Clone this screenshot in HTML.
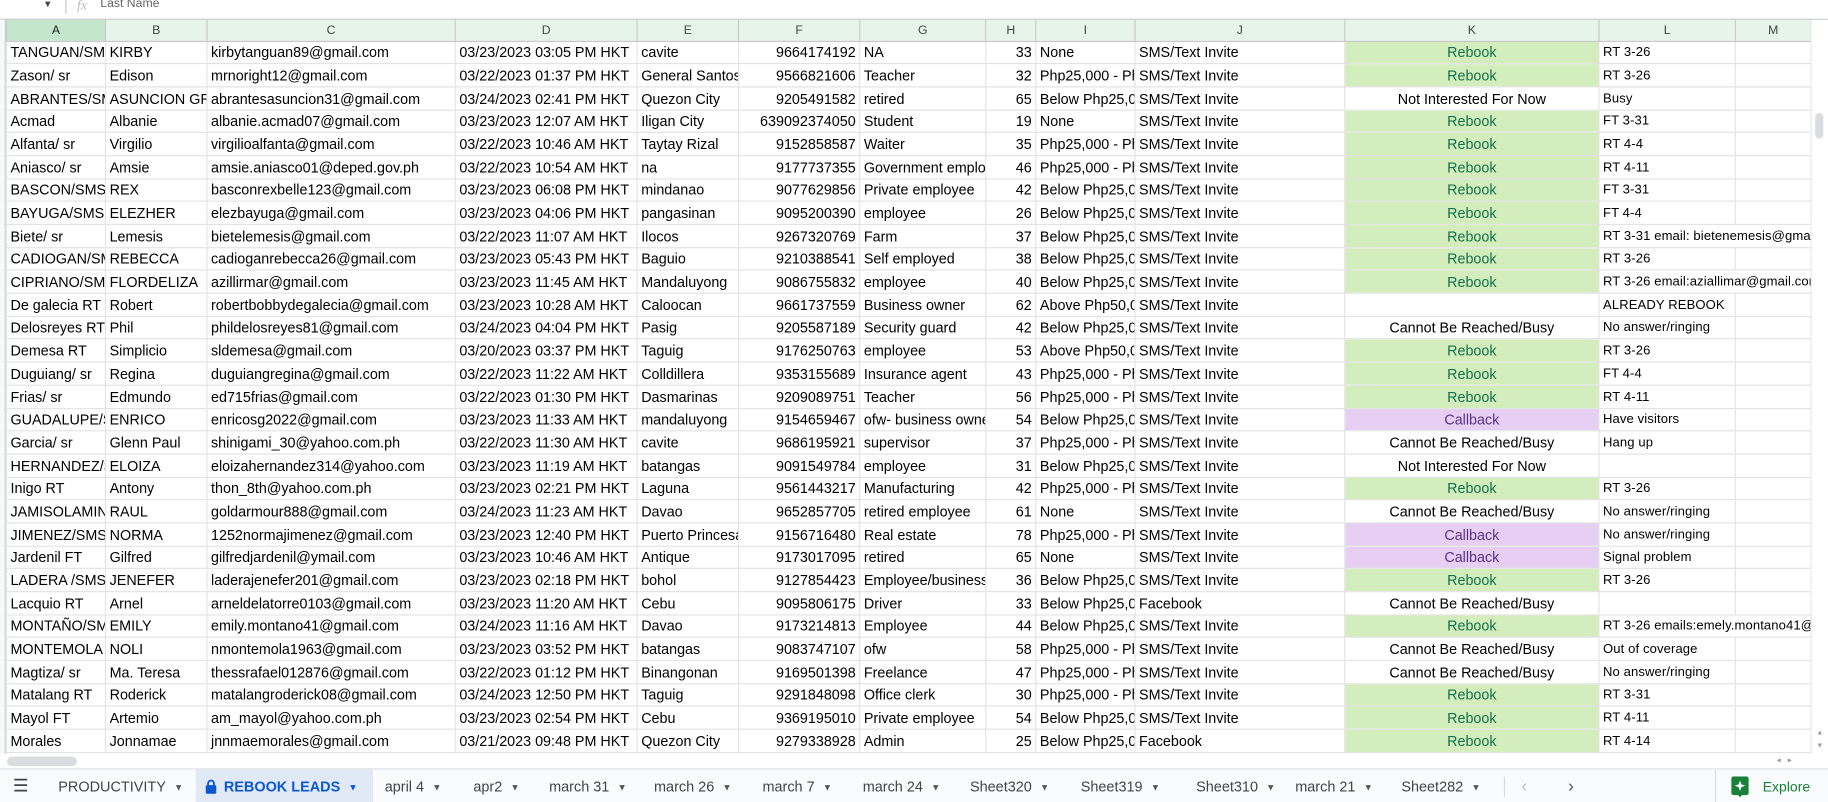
<!DOCTYPE html>
<html><head><meta charset="utf-8">
<style>
*{box-sizing:border-box;margin:0;padding:0}
html,body{width:1828px;height:802px;overflow:hidden;background:#fff}
#w{position:absolute;left:0;top:0;width:1568px;height:688px;transform:scale(1.16582);transform-origin:0 0;font-family:"Liberation Sans",Arial,sans-serif;overflow:hidden;background:#fff}
#top{position:absolute;left:0;top:0;width:1568px;height:17px;background:#fff;border-bottom:1px solid #c7c7c7}
#top .ar{position:absolute;left:37px;top:-1px;font-size:8px;color:#444}
#top .dv{position:absolute;left:56px;top:0;width:1px;height:12px;background:#c7c7c7}
#top .fx{position:absolute;left:66px;top:-3px;font-size:12px;font-style:italic;color:#bbb;font-family:"Liberation Serif",serif}
#top .ln{position:absolute;left:86px;top:-3px;font-size:10.5px;color:#666}
#lstrip{position:absolute;left:0;top:17px;width:5px;height:630px;background:#f8f9fa;border-right:1px solid #b7dfc1}
table{position:absolute;left:5px;top:17px;border-collapse:collapse;table-layout:fixed;width:1548px}
td{height:19.7px;border:1px solid #e2e3e3;font-size:12.3px;color:#000;white-space:nowrap;overflow:hidden;padding:0 3px;line-height:17px;vertical-align:bottom;text-overflow:clip}
tr.h td{height:18px;background:#e6f4ea;color:#444;text-align:center;font-size:10.5px;vertical-align:middle;line-height:16px;border-color:#c7c7c7;border-top:none}
tr.h td.sel{background:#c4e7cb;color:#222}
td.r{text-align:right}
td.k{text-align:center}
td.rb{background:#d4edbc;color:#11734b;text-align:center}
td.cb{background:#e6cff2;color:#5a3286;text-align:center}
td.l{font-size:11.2px;letter-spacing:0.1px}
#vs{position:absolute;left:1553px;top:17px;width:15px;height:630px;background:#fff;border-left:1px solid #e8e8e8}
#vs .t{position:absolute;left:3px;top:80px;width:7px;height:22px;border-radius:4px;background:#dadce0}
#vs .u{position:absolute;left:4px;top:609px;font-size:6px;color:#999}
#vs .d{position:absolute;left:4px;top:620px;font-size:6px;color:#999}
#hs{position:absolute;left:0;top:647px;width:1568px;height:12px;background:#fff}
#hs .t{position:absolute;left:6px;top:2px;width:60px;height:8px;border-radius:4px;background:#dadce0}
#hs .a{position:absolute;left:1524px;top:1px;font-size:7px;color:#999;letter-spacing:6px}
#tabs{position:absolute;left:0;top:659px;width:1568px;height:29px;background:#f9fbfd;border-top:1px solid #e0e3e7;font-size:12.4px;color:#444}
.tb{position:absolute;top:0;height:29px;line-height:30px;white-space:nowrap}
.tb i{font-style:normal;font-size:8px;color:#555;margin-left:7px;position:relative;top:-1px}
.act{background:#e1e9f7;color:#0b57d0;font-weight:bold;padding:0 0 0 8px}
.act i{color:#0b57d0}
#exp{position:absolute;left:1471px;top:0;width:97px;height:29px;border-left:1px solid #dadce0}
</style></head><body><div id="w">
<div id="top"><span class="ar">▼</span><span class="dv"></span><span class="fx">fx</span><span class="ln">Last Name</span></div>
<div id="lstrip"></div>
<table>
<colgroup><col style="width:85px"><col style="width:87px"><col style="width:213px"><col style="width:156px"><col style="width:87px"><col style="width:104px"><col style="width:108px"><col style="width:43px"><col style="width:85px"><col style="width:180px"><col style="width:218px"><col style="width:117px"><col style="width:65px"></colgroup>
<tr class="h"><td class="sel">A</td><td>B</td><td>C</td><td>D</td><td>E</td><td>F</td><td>G</td><td>H</td><td>I</td><td>J</td><td>K</td><td>L</td><td>M</td></tr>
<tr><td>TANGUAN/SMS</td><td>KIRBY</td><td>kirbytanguan89@gmail.com</td><td>03/23/2023 03:05 PM HKT</td><td>cavite</td><td class="r">9664174192</td><td>NA</td><td class="r">33</td><td>None</td><td>SMS/Text Invite</td><td class="rb">Rebook</td><td class="l">RT 3-26</td><td></td></tr>
<tr><td>Zason/ sr</td><td>Edison</td><td>mrnoright12@gmail.com</td><td>03/22/2023 01:37 PM HKT</td><td>General Santos</td><td class="r">9566821606</td><td>Teacher</td><td class="r">32</td><td>Php25,000 - Php</td><td>SMS/Text Invite</td><td class="rb">Rebook</td><td class="l">RT 3-26</td><td></td></tr>
<tr><td>ABRANTES/SMS</td><td>ASUNCION GR</td><td>abrantesasuncion31@gmail.com</td><td>03/24/2023 02:41 PM HKT</td><td>Quezon City</td><td class="r">9205491582</td><td>retired</td><td class="r">65</td><td>Below Php25,000</td><td>SMS/Text Invite</td><td class="k">Not Interested For Now</td><td class="l">Busy</td><td></td></tr>
<tr><td>Acmad</td><td>Albanie</td><td>albanie.acmad07@gmail.com</td><td>03/23/2023 12:07 AM HKT</td><td>Iligan City</td><td class="r">639092374050</td><td>Student</td><td class="r">19</td><td>None</td><td>SMS/Text Invite</td><td class="rb">Rebook</td><td class="l">FT 3-31</td><td></td></tr>
<tr><td>Alfanta/ sr</td><td>Virgilio</td><td>virgilioalfanta@gmail.com</td><td>03/22/2023 10:46 AM HKT</td><td>Taytay Rizal</td><td class="r">9152858587</td><td>Waiter</td><td class="r">35</td><td>Php25,000 - Php</td><td>SMS/Text Invite</td><td class="rb">Rebook</td><td class="l">RT 4-4</td><td></td></tr>
<tr><td>Aniasco/ sr</td><td>Amsie</td><td>amsie.aniasco01@deped.gov.ph</td><td>03/22/2023 10:54 AM HKT</td><td>na</td><td class="r">9177737355</td><td>Government employee</td><td class="r">46</td><td>Php25,000 - Php</td><td>SMS/Text Invite</td><td class="rb">Rebook</td><td class="l">RT 4-11</td><td></td></tr>
<tr><td>BASCON/SMS</td><td>REX</td><td>basconrexbelle123@gmail.com</td><td>03/23/2023 06:08 PM HKT</td><td>mindanao</td><td class="r">9077629856</td><td>Private employee</td><td class="r">42</td><td>Below Php25,000</td><td>SMS/Text Invite</td><td class="rb">Rebook</td><td class="l">FT 3-31</td><td></td></tr>
<tr><td>BAYUGA/SMS</td><td>ELEZHER</td><td>elezbayuga@gmail.com</td><td>03/23/2023 04:06 PM HKT</td><td>pangasinan</td><td class="r">9095200390</td><td>employee</td><td class="r">26</td><td>Below Php25,000</td><td>SMS/Text Invite</td><td class="rb">Rebook</td><td class="l">FT 4-4</td><td></td></tr>
<tr><td>Biete/ sr</td><td>Lemesis</td><td>bietelemesis@gmail.com</td><td>03/22/2023 11:07 AM HKT</td><td>Ilocos</td><td class="r">9267320769</td><td>Farm</td><td class="r">37</td><td>Below Php25,000</td><td>SMS/Text Invite</td><td class="rb">Rebook</td><td class="l" colspan="2">RT 3-31 email: bietenemesis@gmail.com</td></tr>
<tr><td>CADIOGAN/SMS</td><td>REBECCA</td><td>cadioganrebecca26@gmail.com</td><td>03/23/2023 05:43 PM HKT</td><td>Baguio</td><td class="r">9210388541</td><td>Self employed</td><td class="r">38</td><td>Below Php25,000</td><td>SMS/Text Invite</td><td class="rb">Rebook</td><td class="l">RT 3-26</td><td></td></tr>
<tr><td>CIPRIANO/SMS</td><td>FLORDELIZA</td><td>azillirmar@gmail.com</td><td>03/23/2023 11:45 AM HKT</td><td>Mandaluyong</td><td class="r">9086755832</td><td>employee</td><td class="r">40</td><td>Below Php25,000</td><td>SMS/Text Invite</td><td class="rb">Rebook</td><td class="l" colspan="2">RT 3-26 email:aziallimar@gmail.com</td></tr>
<tr><td>De galecia RT</td><td>Robert</td><td>robertbobbydegalecia@gmail.com</td><td>03/23/2023 10:28 AM HKT</td><td>Caloocan</td><td class="r">9661737559</td><td>Business owner</td><td class="r">62</td><td>Above Php50,000</td><td>SMS/Text Invite</td><td></td><td class="l">ALREADY REBOOK</td><td></td></tr>
<tr><td>Delosreyes RT</td><td>Phil</td><td>phildelosreyes81@gmail.com</td><td>03/24/2023 04:04 PM HKT</td><td>Pasig</td><td class="r">9205587189</td><td>Security guard</td><td class="r">42</td><td>Below Php25,000</td><td>SMS/Text Invite</td><td class="k">Cannot Be Reached/Busy</td><td class="l">No answer/ringing</td><td></td></tr>
<tr><td>Demesa RT</td><td>Simplicio</td><td>sldemesa@gmail.com</td><td>03/20/2023 03:37 PM HKT</td><td>Taguig</td><td class="r">9176250763</td><td>employee</td><td class="r">53</td><td>Above Php50,000</td><td>SMS/Text Invite</td><td class="rb">Rebook</td><td class="l">RT 3-26</td><td></td></tr>
<tr><td>Duguiang/ sr</td><td>Regina</td><td>duguiangregina@gmail.com</td><td>03/22/2023 11:22 AM HKT</td><td>Colldillera</td><td class="r">9353155689</td><td>Insurance agent</td><td class="r">43</td><td>Php25,000 - Php</td><td>SMS/Text Invite</td><td class="rb">Rebook</td><td class="l">FT 4-4</td><td></td></tr>
<tr><td>Frias/ sr</td><td>Edmundo</td><td>ed715frias@gmail.com</td><td>03/22/2023 01:30 PM HKT</td><td>Dasmarinas</td><td class="r">9209089751</td><td>Teacher</td><td class="r">56</td><td>Php25,000 - Php</td><td>SMS/Text Invite</td><td class="rb">Rebook</td><td class="l">RT 4-11</td><td></td></tr>
<tr><td>GUADALUPE/SMS</td><td>ENRICO</td><td>enricosg2022@gmail.com</td><td>03/23/2023 11:33 AM HKT</td><td>mandaluyong</td><td class="r">9154659467</td><td>ofw- business owner</td><td class="r">54</td><td>Below Php25,000</td><td>SMS/Text Invite</td><td class="cb">Callback</td><td class="l">Have visitors</td><td></td></tr>
<tr><td>Garcia/ sr</td><td>Glenn Paul</td><td>shinigami_30@yahoo.com.ph</td><td>03/22/2023 11:30 AM HKT</td><td>cavite</td><td class="r">9686195921</td><td>supervisor</td><td class="r">37</td><td>Php25,000 - Php</td><td>SMS/Text Invite</td><td class="k">Cannot Be Reached/Busy</td><td class="l">Hang up</td><td></td></tr>
<tr><td>HERNANDEZ/SMS</td><td>ELOIZA</td><td>eloizahernandez314@yahoo.com</td><td>03/23/2023 11:19 AM HKT</td><td>batangas</td><td class="r">9091549784</td><td>employee</td><td class="r">31</td><td>Below Php25,000</td><td>SMS/Text Invite</td><td class="k">Not Interested For Now</td><td class="l"></td><td></td></tr>
<tr><td>Inigo RT</td><td>Antony</td><td>thon_8th@yahoo.com.ph</td><td>03/23/2023 02:21 PM HKT</td><td>Laguna</td><td class="r">9561443217</td><td>Manufacturing</td><td class="r">42</td><td>Php25,000 - Php</td><td>SMS/Text Invite</td><td class="rb">Rebook</td><td class="l">RT 3-26</td><td></td></tr>
<tr><td>JAMISOLAMIN</td><td>RAUL</td><td>goldarmour888@gmail.com</td><td>03/24/2023 11:23 AM HKT</td><td>Davao</td><td class="r">9652857705</td><td>retired employee</td><td class="r">61</td><td>None</td><td>SMS/Text Invite</td><td class="k">Cannot Be Reached/Busy</td><td class="l">No answer/ringing</td><td></td></tr>
<tr><td>JIMENEZ/SMS</td><td>NORMA</td><td>1252normajimenez@gmail.com</td><td>03/23/2023 12:40 PM HKT</td><td>Puerto Princesa</td><td class="r">9156716480</td><td>Real estate</td><td class="r">78</td><td>Php25,000 - Php</td><td>SMS/Text Invite</td><td class="cb">Callback</td><td class="l">No answer/ringing</td><td></td></tr>
<tr><td>Jardenil FT</td><td>Gilfred</td><td>gilfredjardenil@ymail.com</td><td>03/23/2023 10:46 AM HKT</td><td>Antique</td><td class="r">9173017095</td><td>retired</td><td class="r">65</td><td>None</td><td>SMS/Text Invite</td><td class="cb">Callback</td><td class="l">Signal problem</td><td></td></tr>
<tr><td>LADERA /SMS</td><td>JENEFER</td><td>laderajenefer201@gmail.com</td><td>03/23/2023 02:18 PM HKT</td><td>bohol</td><td class="r">9127854423</td><td>Employee/business</td><td class="r">36</td><td>Below Php25,000</td><td>SMS/Text Invite</td><td class="rb">Rebook</td><td class="l">RT 3-26</td><td></td></tr>
<tr><td>Lacquio RT</td><td>Arnel</td><td>arneldelatorre0103@gmail.com</td><td>03/23/2023 11:20 AM HKT</td><td>Cebu</td><td class="r">9095806175</td><td>Driver</td><td class="r">33</td><td>Below Php25,000</td><td>Facebook</td><td class="k">Cannot Be Reached/Busy</td><td class="l"></td><td></td></tr>
<tr><td>MONTAÑO/SMS</td><td>EMILY</td><td>emily.montano41@gmail.com</td><td>03/24/2023 11:16 AM HKT</td><td>Davao</td><td class="r">9173214813</td><td>Employee</td><td class="r">44</td><td>Below Php25,000</td><td>SMS/Text Invite</td><td class="rb">Rebook</td><td class="l" colspan="2">RT 3-26 emails:emely.montano41@gmail.com</td></tr>
<tr><td>MONTEMOLA</td><td>NOLI</td><td>nmontemola1963@gmail.com</td><td>03/23/2023 03:52 PM HKT</td><td>batangas</td><td class="r">9083747107</td><td>ofw</td><td class="r">58</td><td>Php25,000 - Php</td><td>SMS/Text Invite</td><td class="k">Cannot Be Reached/Busy</td><td class="l">Out of coverage</td><td></td></tr>
<tr><td>Magtiza/ sr</td><td>Ma. Teresa</td><td>thessrafael012876@gmail.com</td><td>03/22/2023 01:12 PM HKT</td><td>Binangonan</td><td class="r">9169501398</td><td>Freelance</td><td class="r">47</td><td>Php25,000 - Php</td><td>SMS/Text Invite</td><td class="k">Cannot Be Reached/Busy</td><td class="l">No answer/ringing</td><td></td></tr>
<tr><td>Matalang RT</td><td>Roderick</td><td>matalangroderick08@gmail.com</td><td>03/24/2023 12:50 PM HKT</td><td>Taguig</td><td class="r">9291848098</td><td>Office clerk</td><td class="r">30</td><td>Php25,000 - Php</td><td>SMS/Text Invite</td><td class="rb">Rebook</td><td class="l">RT 3-31</td><td></td></tr>
<tr><td>Mayol FT</td><td>Artemio</td><td>am_mayol@yahoo.com.ph</td><td>03/23/2023 02:54 PM HKT</td><td>Cebu</td><td class="r">9369195010</td><td>Private employee</td><td class="r">54</td><td>Below Php25,000</td><td>SMS/Text Invite</td><td class="rb">Rebook</td><td class="l">RT 4-11</td><td></td></tr>
<tr><td>Morales</td><td>Jonnamae</td><td>jnnmaemorales@gmail.com</td><td>03/21/2023 09:48 PM HKT</td><td>Quezon City</td><td class="r">9279338928</td><td>Admin</td><td class="r">25</td><td>Below Php25,000</td><td>Facebook</td><td class="rb">Rebook</td><td class="l">RT 4-14</td><td></td></tr>
</table>
<div id="vs"><div class="t"></div><span class="u">▲</span><span class="d">▼</span></div>
<div id="hs"><div class="t"></div><span class="a">◂▸</span></div>
<div id="tabs">
<div class="tb" style="left:11px;font-size:15px;color:#444">☰</div>
<div class="tb" style="left:50px">PRODUCTIVITY<i>▼</i></div>
<div class="tb act" style="left:168px;width:152px"><svg width="10" height="13" viewBox="0 0 10 13" style="position:relative;top:2px;margin-right:6px"><path d="M2.5 6V4a2.5 2.5 0 0 1 5 0v2" fill="none" stroke="#0b57d0" stroke-width="1.6"/><rect x="0.5" y="5.5" width="9" height="7.5" rx="1.2" fill="#0b57d0"/></svg>REBOOK LEADS<i>▼</i></div>
<div class="tb" style="left:330px">april 4<i>▼</i></div>
<div class="tb" style="left:406px">apr2<i>▼</i></div>
<div class="tb" style="left:471px">march 31<i>▼</i></div>
<div class="tb" style="left:561px">march 26<i>▼</i></div>
<div class="tb" style="left:654px">march 7<i>▼</i></div>
<div class="tb" style="left:740px">march 24<i>▼</i></div>
<div class="tb" style="left:832px">Sheet320<i>▼</i></div>
<div class="tb" style="left:927px">Sheet319<i>▼</i></div>
<div class="tb" style="left:1026px">Sheet310<i>▼</i></div>
<div class="tb" style="left:1111px">march 21<i>▼</i></div>
<div class="tb" style="left:1202px">Sheet282<i>▼</i></div>
<div style="position:absolute;left:1290px;top:6px;width:1px;height:18px;background:#dadce0"></div>
<div class="tb" style="left:1305px;color:#bbb;font-size:15px">‹</div>
<div class="tb" style="left:1345px;color:#555;font-size:15px">›</div>
<div id="exp"><svg width="15" height="18" viewBox="0 0 15 18" style="position:absolute;left:13px;top:6px"><path d="M2 0h11a2 2 0 0 1 2 2v12a2 2 0 0 1-2 2H9l-1.5 2L6 16H2a2 2 0 0 1-2-2V2a2 2 0 0 1 2-2z" fill="#188038"/><path d="M7.5 3.5l1.2 3.3 3.3 1.2-3.3 1.2-1.2 3.3-1.2-3.3L3 8l3.3-1.2z" fill="#fff"/></svg><span style="position:absolute;left:40px;top:0;line-height:30px;color:#188038;font-size:12px">Explore</span></div>
</div>
</div></body></html>
